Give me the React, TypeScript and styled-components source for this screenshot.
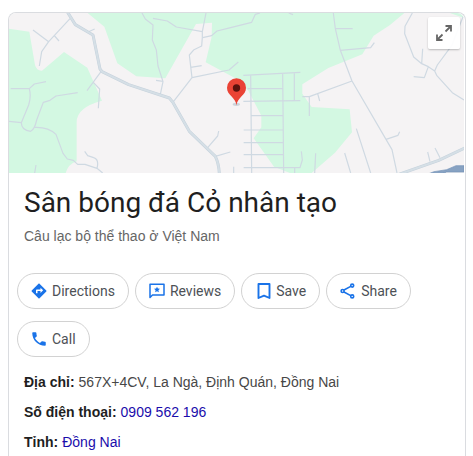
import React from "react";
import styled, { createGlobalStyle } from "styled-components";

const GlobalStyle = createGlobalStyle`
  * { box-sizing: border-box; }
  body {
    margin: 0;
    background: #fff;
    color: #474747;
    font-family: "Liberation Sans", Arial, sans-serif;
    font-size: 14px;
  }
`;

const Card = styled.article`
  margin: 12px 7px 0 8px;
  border: 1px solid #dadce0;
  border-bottom: 0;
  border-radius: 8px 8px 0 0;
`;

const MapFrame = styled.div`
  position: relative;
  height: 160px;
  margin-right: 1px;
  overflow: hidden;
  border-radius: 7px 7px 0 0;
`;

const MapDrawing = styled.svg`
  display: block;
  width: 100%;
  height: 100%;
`;

const ExpandButton = styled.button`
  position: absolute;
  top: 4px;
  right: 4px;
  display: grid;
  place-items: center;
  width: 32px;
  height: 32px;
  padding: 0;
  border: 0;
  border-radius: 2px;
  background: rgba(255, 255, 255, 0.94);
  box-shadow: 0 1px 2px rgba(0, 0, 0, 0.24);
  cursor: pointer;
`;

const Heading = styled.header`
  padding: 12px 15px 0;
`;

const Title = styled.h1`
  margin: 0;
  color: #1f1f1f;
  font-family: Roboto, sans-serif;
  font-size: 28px;
  font-weight: 400;
  line-height: 36px;
`;

const Category = styled.p`
  margin: 5px 0 0;
  color: #666;
  line-height: 20px;
`;

const Actions = styled.div`
  display: flex;
  flex-wrap: wrap;
  gap: 12px 6px;
  padding: 27px 8px 0;
`;

const ActionButton = styled.button`
  display: flex;
  align-items: center;
  gap: 4px;
  height: 36px;
  padding: 0 13px 0 12px;
  border: 1px solid #d2d2d2;
  border-radius: 18px;
  background: #fff;
  color: #4d5156;
  font-family: Roboto, sans-serif;
  font-size: 14px;
  line-height: 20px;
  cursor: pointer;
`;

const ActionIcon = styled.svg`
  width: 18px;
  height: 18px;
  color: #1a73e8;
`;

const Facts = styled.dl`
  margin: 0;
  padding: 10px 15px 0;
`;

const Fact = styled.div`
  display: flex;
  gap: 4px;
  line-height: 30px;
`;

const Term = styled.dt`
  color: #1f1f1f;
  font-weight: 700;
`;

const Detail = styled.dd`
  margin: 0;
`;

const FactLink = styled.a`
  color: #1a0dab;
  text-decoration: none;
`;

const parks = [
  "M27 86L88 95L105 195Q110 213 126 212L192 156L262 203L306 302Q230 322 230 366V484Q205 492 197 519H27Z",
  "M263 39L313 80L352 190L409 229L496 235L588 72L636 68L635 110L617 187L706 235L745 272L784 347V382L761 415L822 500L870 519H935L1005 458L1056 397L1049 328L935 321L907 281V253L985 204L1087 163L1121 107L1170 75L1213 39Z",
  "M1350 39H1392V54Z",
];

const streets = [
  "M99 90L146 125L125 155L118 198M210 56L146 125M164 108L177 123",
  "M264 96L284 87M303 215L261 272M280 247L299 267L295 325",
  "M32 266H88L103 252L138 245M88 266Q94 290 86 315L64 368L27 364M64 368Q64 390 92 394Q104 388 110 360L130 307L150 301L168 288L233 278",
  "M103 382Q145 380 168 403L189 460L202 477L220 481L233 493L255 493L291 505L308 519M291 505Q298 478 281 473L263 467L254 454M104 519L108 495",
  "M426 39L436 57L459 75L457 120L469 150L474 198L489 245L481 283M468 241L489 244",
  "M459 55L502 63L529 81L607 95M618 39L607 95V112L605 138L582 149L568 165L576 233L518 308M572 202L605 197M576 233L687 210L715 186",
  "M608 113L635 107L651 93L680 86L755 67L766 43L780 39M866 39L879 44",
  "M730 226L901 217M752 224L755 519M848 220L851 519M883 219V302M743 266H848M730 304L901 302M753 347H848M731 390H849M731 428H849M731 464H849M731 503H900L907 480L904 454M884 503V519M947 460L944 519M701 500V519",
  "M623 443L653 408L656 393M646 469L691 456",
  "M907 290H928L1056 243M928 290V348M953 281L959 303",
  "M1000 39L1006 86L1021 151L1056 243L1158 418L1176 449L1191 519M1006 86H1058M1021 151L1112 143L1123 128M1158 418L1194 406L1199 395",
  "M1034 459L1052 519M1069 386L1112 519",
  "M1237 39L1215 79L1214 101L1241 171L1265 191L1285 200L1304 213L1310 226L1357 278L1392 300M1265 191L1268 146M1285 200L1273 233L1241 230M1304 213L1312 195L1355 137L1392 43",
  "M1283 456L1290 485M1305 444L1320 473",
];

const highways = [
  "M203 37L226 74L279 105L300 207L306 215L386 254L508 294L518 306L568 394L646 469Q657 492 658 522",
  "M1194 524L1316 481L1394 444",
];

function LocationMap() {
  return (
    <MapDrawing viewBox="27 39 1365 480" preserveAspectRatio="xMidYMid slice" aria-hidden="true">
      <path d="M27 39H1392V519H27Z" fill="#f5f3f4" />
      {parks.map((d) => (
        <path key={d} d={d} fill="#d3f8e2" />
      ))}
      {streets.map((d) => (
        <path key={d} d={d} fill="none" stroke="#cfd9e2" strokeWidth="3.6" strokeLinejoin="round" />
      ))}
      {highways.map((d) => (
        <g key={d} fill="none" strokeLinejoin="round">
          <path d={d} stroke="#c6d2dc" strokeWidth="9" />
          <path d={d} stroke="#d5dfe6" strokeWidth="6" />
        </g>
      ))}
      <path d="M1284 522L1302 515L1340 509L1368 497H1392V516L1340 516L1325 522Z" fill="#87a2c2" stroke="#7391b7" strokeWidth="2" />
      <ellipse cx="709" cy="313" rx="11" ry="5" fill="#cbd3da" />
      <path d="M709.500 316C707 290 681 287 681 263A28.500 28.500 0 0 1 738 263C738 287 712 290 709.500 316Z" fill="#ea4335" />
      <circle cx="709.500" cy="264" r="11" fill="#5b120d" />
    </MapDrawing>
  );
}

const actions = [
  {
    label: "Directions",
    icon: (
      <path
        transform="scale(.75)"
        fill="currentColor"
        d="M21.71 11.29l-9-9c-.39-.39-1.02-.39-1.41 0l-9 9c-.39.39-.39 1.02 0 1.41l9 9c.39.39 1.02.39 1.41 0l9-9c.39-.38.39-1.01 0-1.41zM14 14.500V12h-4v3H8v-4c0-.55.45-1 1-1h5V7.500l3.500 3.500-3.500 3.500z"
      />
    ),
  },
  {
    label: "Reviews",
    icon: (
      <>
        <path d="M2 2.200H16V13H4.500L2 15.500Z" fill="none" stroke="currentColor" strokeWidth="1.500" strokeLinejoin="round" />
        <path d="M9 4.700l.9 1.900 2.100.2-1.600 1.400.5 2.100L9 9.200l-1.900 1.100.5-2.100L6 6.800l2.100-.2z" fill="currentColor" />
      </>
    ),
  },
  {
    label: "Save",
    icon: <path d="M4.500 2H15.500V16L10 13.600L4.500 16Z" fill="none" stroke="currentColor" strokeWidth="1.900" strokeLinejoin="round" />,
  },
  {
    label: "Share",
    icon: (
      <g fill="none" stroke="currentColor" strokeWidth="1.600">
        <path d="M4.500 8.300L12.200 4.100M4.500 9.700L12.200 13.900" />
        <circle cx="3.600" cy="9" r="1.500" fill="#fff" />
        <circle cx="13.200" cy="3.600" r="1.500" fill="#fff" />
        <circle cx="13.200" cy="14.400" r="1.500" fill="#fff" />
      </g>
    ),
  },
  {
    label: "Call",
    icon: (
      <path
        transform="scale(.75)"
        fill="currentColor"
        d="M6.620 10.790c1.440 2.830 3.760 5.140 6.590 6.590l2.200-2.200c.27-.27.67-.36 1.020-.24 1.120.37 2.330.57 3.570.57.55 0 1 .45 1 1V20c0 .55-.45 1-1 1-9.390 0-17-7.610-17-17 0-.55.45-1 1-1h3.500c.55 0 1 .45 1 1 0 1.250.2 2.450.57 3.570.11.35.03.74-.25 1.020l-2.200 2.200z"
      />
    ),
  },
];

export default function App() {
  return (
    <>
      <GlobalStyle />
      <Card>
        <MapFrame>
          <LocationMap />
          <ExpandButton type="button" aria-label="Expand map">
            <svg width="16" height="16" viewBox="0 0 16 16" fill="none" stroke="#666" strokeWidth="1.800">
              <path d="M9.500 1H15V6.500M15 1L9.500 6.500M1 9.500V15H6.500M1 15L6.500 9.500" />
            </svg>
          </ExpandButton>
        </MapFrame>
        <Heading>
          <Title>Sân bóng đá Cỏ nhân tạo</Title>
          <Category>Câu lạc bộ thể thao ở Việt Nam</Category>
        </Heading>
        <Actions>
          {actions.map(({ label, icon }) => (
            <ActionButton key={label} type="button">
              <ActionIcon viewBox="0 0 18 18" aria-hidden="true">
                {icon}
              </ActionIcon>
              {label}
            </ActionButton>
          ))}
        </Actions>
        <Facts>
          <Fact>
            <Term>Địa chỉ:</Term>
            <Detail>567X+4CV, La Ngà, Định Quán, Đồng Nai</Detail>
          </Fact>
          <Fact>
            <Term>Số điện thoại:</Term>
            <Detail>
              <FactLink href="tel:0909562196">0909 562 196</FactLink>
            </Detail>
          </Fact>
          <Fact>
            <Term>Tỉnh:</Term>
            <Detail>
              <FactLink href="#dong-nai">Đồng Nai</FactLink>
            </Detail>
          </Fact>
        </Facts>
      </Card>
    </>
  );
}
